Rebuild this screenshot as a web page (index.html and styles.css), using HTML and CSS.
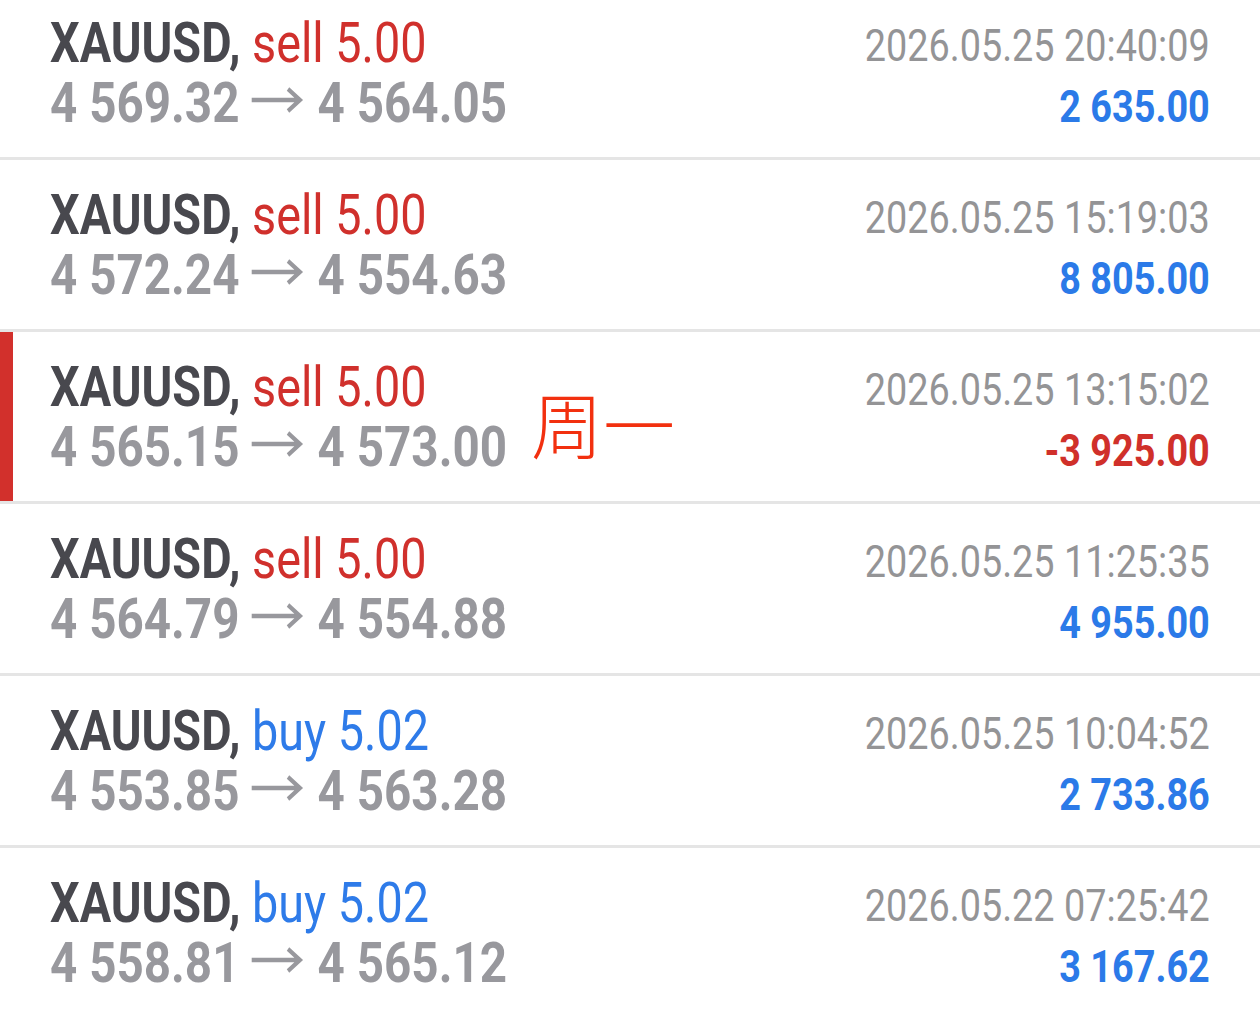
FILE: index.html
```html
<!DOCTYPE html>
<html lang="en">

<head>
  <meta charset="UTF-8">
  <meta name="viewport" content="width=device-width, initial-scale=1.0">
  <title>History</title>
  <link rel="stylesheet" href="styles.css">
</head>

<body>
  <ul class="deals">
    <li class="deal">
      <div class="deal-main">
        <div class="deal-title"><span class="symbol">XAUUSD,</span> <span class="type sell">sell 5.00</span></div>
        <div class="deal-prices">4 569.32 <svg class="arrow" viewBox="0 0 61 26"><path d="M0 13H57M43 2L57 13L43 24"/></svg> 4 564.05</div>
      </div>
      <div class="deal-side">
        <div class="deal-time">2026.05.25 20:40:09</div>
        <div class="deal-profit">2 635.00</div>
      </div>
    </li>
    <li class="deal">
      <div class="deal-main">
        <div class="deal-title"><span class="symbol">XAUUSD,</span> <span class="type sell">sell 5.00</span></div>
        <div class="deal-prices">4 572.24 <svg class="arrow" viewBox="0 0 61 26"><path d="M0 13H57M43 2L57 13L43 24"/></svg> 4 554.63</div>
      </div>
      <div class="deal-side">
        <div class="deal-time">2026.05.25 15:19:03</div>
        <div class="deal-profit">8 805.00</div>
      </div>
    </li>
    <li class="deal selected">
      <div class="deal-main">
        <div class="deal-title"><span class="symbol">XAUUSD,</span> <span class="type sell">sell 5.00</span></div>
        <div class="deal-prices">4 565.15 <svg class="arrow" viewBox="0 0 61 26"><path d="M0 13H57M43 2L57 13L43 24"/></svg> 4 573.00</div>
      </div>
      <div class="deal-side">
        <div class="deal-time">2026.05.25 13:15:02</div>
        <div class="deal-profit loss">-3 925.00</div>
      </div>
      <span class="note">周一</span>
    </li>
    <li class="deal">
      <div class="deal-main">
        <div class="deal-title"><span class="symbol">XAUUSD,</span> <span class="type sell">sell 5.00</span></div>
        <div class="deal-prices">4 564.79 <svg class="arrow" viewBox="0 0 61 26"><path d="M0 13H57M43 2L57 13L43 24"/></svg> 4 554.88</div>
      </div>
      <div class="deal-side">
        <div class="deal-time">2026.05.25 11:25:35</div>
        <div class="deal-profit">4 955.00</div>
      </div>
    </li>
    <li class="deal">
      <div class="deal-main">
        <div class="deal-title"><span class="symbol">XAUUSD,</span> <span class="type buy">buy 5.02</span></div>
        <div class="deal-prices">4 553.85 <svg class="arrow" viewBox="0 0 61 26"><path d="M0 13H57M43 2L57 13L43 24"/></svg> 4 563.28</div>
      </div>
      <div class="deal-side">
        <div class="deal-time">2026.05.25 10:04:52</div>
        <div class="deal-profit">2 733.86</div>
      </div>
    </li>
    <li class="deal">
      <div class="deal-main">
        <div class="deal-title"><span class="symbol">XAUUSD,</span> <span class="type buy">buy 5.02</span></div>
        <div class="deal-prices">4 558.81 <svg class="arrow" viewBox="0 0 61 26"><path d="M0 13H57M43 2L57 13L43 24"/></svg> 4 565.12</div>
      </div>
      <div class="deal-side">
        <div class="deal-time">2026.05.22 07:25:42</div>
        <div class="deal-profit">3 167.62</div>
      </div>
    </li>
  </ul>
</body>

</html>
```

FILE: styles.css
```css
body {
  margin: 0;
  padding: 0;
  background: #fff;
  font-family: Roboto, "Liberation Sans", sans-serif;
  overflow: hidden;
}

.deals {
  list-style: none;
  margin: -12px 0 0 0;
  padding: 0;
}

.deal {
  position: relative;
  display: flex;
  justify-content: space-between;
  align-items: flex-start;
  height: 169px;
  box-sizing: content-box;
  padding: 0 50px;
  border-bottom: 3px solid #e5e5e5;
}

.deal.selected {
  box-shadow: inset 13px 0 0 #d2302c;
}

.deal-main {
  padding-top: 25px;
  font-size: 56px;
  line-height: 60px;
  white-space: nowrap;
}

.deal-title {
  transform: scaleX(0.835);
  transform-origin: left top;
}

.symbol {
  font-weight: bold;
  color: #48484e;
}

.type.sell {
  color: #d0302c;
}

.type.buy {
  color: #2e7be9;
}

.deal-prices {
  font-weight: bold;
  color: #98989d;
  transform: scaleX(0.85);
  transform-origin: left top;
}

.arrow {
  width: 61px;
  height: 26px;
  margin-right: 3px;
  vertical-align: 9px;
  fill: none;
  stroke: #98989d;
  stroke-width: 4.6;
}

.deal-side {
  padding-top: 28px;
  font-size: 45px;
  line-height: 60px;
  text-align: right;
  white-space: nowrap;
  transform: scaleX(0.84);
  transform-origin: right top;
}

.deal-time {
  color: #949496;
}

.deal-profit {
  font-weight: bold;
  color: #2b7ae8;
  line-height: 62px;
}

.deal-profit.loss {
  color: #d0302a;
}

.note {
  position: absolute;
  left: 531px;
  top: 54px;
  font-family: "Noto Sans CJK SC", sans-serif;
  font-weight: 300;
  font-size: 72px;
  line-height: 1;
  color: #f2300f;
}
```
